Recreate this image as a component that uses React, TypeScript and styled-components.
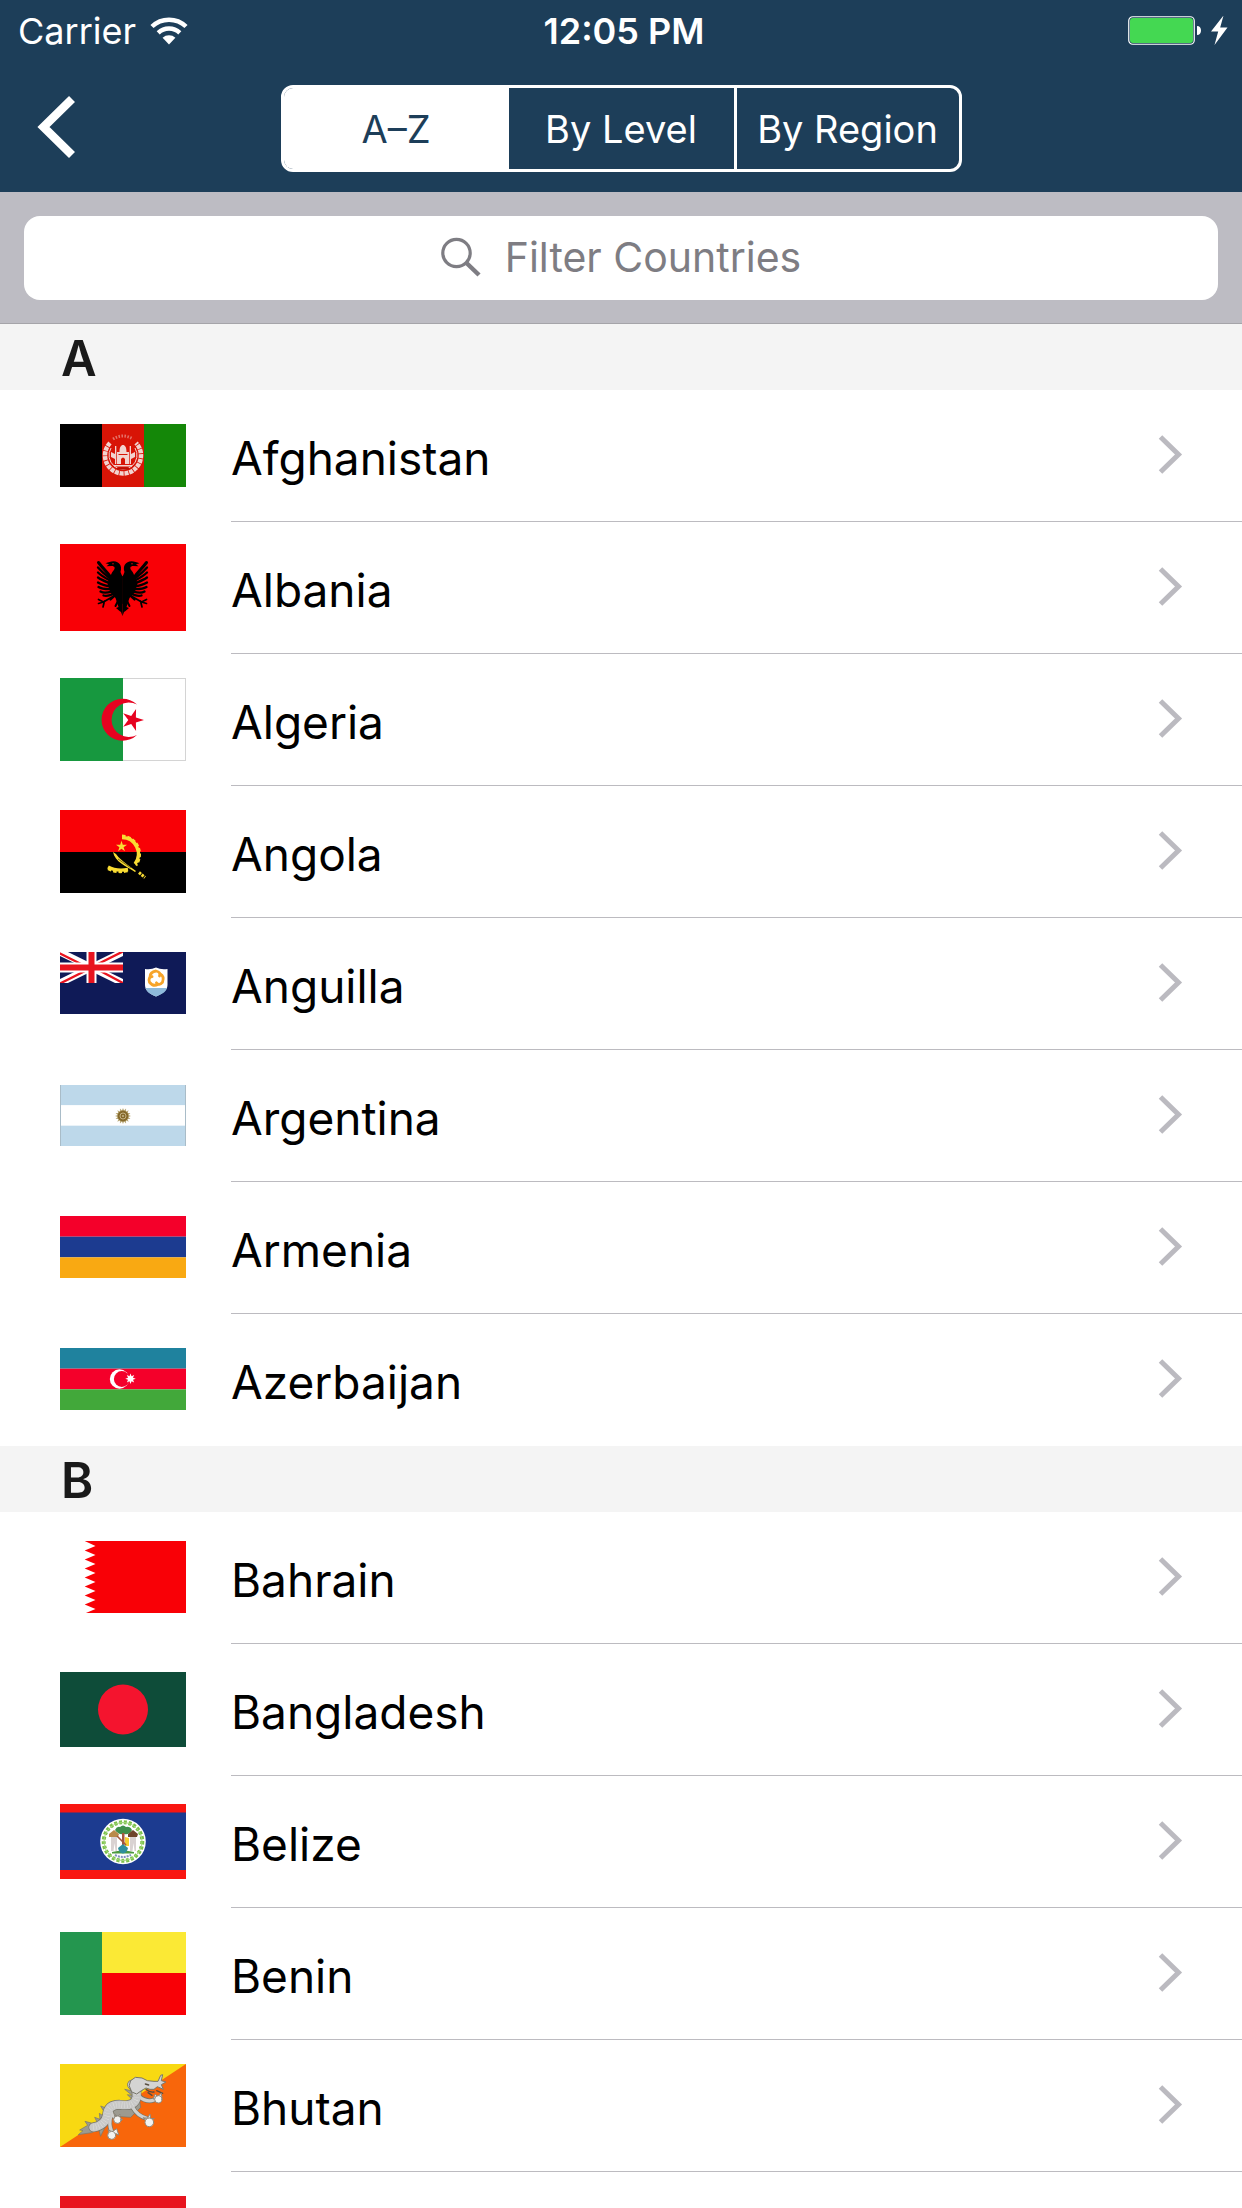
import React, { useState } from "react";
import styled, { createGlobalStyle } from "styled-components";

const GlobalStyle = createGlobalStyle`
  * { box-sizing: border-box; }
  body {
    margin: 0;
    background: #ffffff;
    color: #000000;
    font-family: Inter, "Liberation Sans", sans-serif;
  }
`;

const navy = "#1d3e59";

const Screen = styled.div`
  height: 100vh;
  overflow: hidden;
  background: #ffffff;
`;

const TopBar = styled.header`
  background: ${navy};
  color: #ffffff;
`;

const StatusBar = styled.div`
  display: grid;
  grid-template-columns: 1fr auto 1fr;
  align-items: center;
  height: 60px;
  padding: 2px 12px 0 18px;
  font-size: 36px;
  line-height: 44px;
`;

const Carrier = styled.div`
  display: flex;
  align-items: center;
  gap: 14px;
`;

const Clock = styled.time`
  font-weight: 600;
`;

const Power = styled.div`
  display: flex;
  align-items: center;
  justify-content: flex-end;
`;

const NavBar = styled.nav`
  display: grid;
  grid-template-columns: 1fr 681px 1fr;
  align-items: start;
  height: 132px;
  padding-top: 25px;
`;

const BackButton = styled.button`
  display: flex;
  align-items: center;
  width: 112px;
  height: 83px;
  padding: 0 0 0 36px;
  border: 0;
  background: none;
  color: inherit;
  cursor: pointer;
`;

const Segments = styled.div`
  display: grid;
  grid-template-columns: repeat(3, 1fr);
  height: 87px;
  border: 3px solid #ffffff;
  border-radius: 12px;
  overflow: hidden;
`;

const Segment = styled.button<{ $active: boolean; $divided: boolean }>`
  padding: 0;
  border: 0;
  border-left: ${(p) => (p.$divided ? "3px solid #ffffff" : "0")};
  background: ${(p) => (p.$active ? "#ffffff" : "transparent")};
  color: ${(p) => (p.$active ? navy : "#ffffff")};
  font: 400 38px/48px Inter, "Liberation Sans", sans-serif;
  white-space: nowrap;
  cursor: pointer;
`;

const SearchBar = styled.form`
  padding: 24px 24px 23px;
  background: #bdbcc3;
  border-bottom: 1px solid #a5a4a9;
`;

const SearchField = styled.label`
  display: flex;
  align-items: center;
  justify-content: center;
  gap: 24px;
  height: 84px;
  padding-bottom: 3px;
  border-radius: 16px;
  background: #ffffff;
  color: #7e7d83;
`;

const SearchInput = styled.input`
  field-sizing: content;
  max-width: 80%;
  padding: 0;
  border: 0;
  outline: 0;
  background: none;
  color: #000000;
  font: 400 41px/52px Inter, "Liberation Sans", sans-serif;

  &::placeholder {
    color: #7e7d83;
    opacity: 1;
  }
`;

const SectionTitle = styled.h2`
  height: 66px;
  margin: 0;
  padding: 4px 61px 0;
  background: #f4f4f4;
  color: #1a1a1a;
  font-size: 49px;
  line-height: 62px;
  font-weight: 600;
`;

const CountryList = styled.ul`
  margin: 0;
  padding: 0;
  list-style: none;
`;

const CountryLink = styled.a`
  display: flex;
  align-items: center;
  gap: 45px;
  padding-left: 60px;
  color: inherit;
  text-decoration: none;
`;

const FlagBox = styled.span`
  flex: none;
  display: flex;
  width: 126px;
  padding-bottom: 2px;
`;

const CountryBody = styled.span`
  flex: 1;
  display: flex;
  align-items: center;
  justify-content: space-between;
  height: 132px;
  padding-right: 59px;
  border-bottom: 1px solid #bcbbc0;

  li:last-child > a > & {
    border-bottom-color: transparent;
  }
`;

const CountryName = styled.span`
  padding-top: 4px;
  font-size: 46px;
  line-height: 56px;
`;

/* ---------- icons ---------- */

const WifiIcon = () => (
  <svg width="38" height="28" viewBox="0 0 38 28" fill="none" aria-hidden="true">
    <path d="M2 9.5a24.5 24.5 0 0 1 34 0" stroke="#fff" strokeWidth="4.500" />
    <path d="M8.2 15.8a15.8 15.8 0 0 1 21.6 0" stroke="#fff" strokeWidth="4.500" />
    <path d="M19 27.5 12.6 20.8a9.5 9.5 0 0 1 12.8 0Z" fill="#fff" />
  </svg>
);

const BatteryIcon = () => (
  <svg width="102" height="30" viewBox="0 0 102 30" fill="none" aria-hidden="true">
    <rect x=".75" y=".75" width="65.5" height="27.5" rx="4" stroke="#fff" strokeWidth="1.200" />
    <rect x="2" y="2" width="63" height="25" rx="3" fill="#44d852" />
    <path d="M69 10c2.700 0 4 2 4 4.500s-1.300 4.500-4 4.500Z" fill="#fff" />
    <path d="M95.500-.5 83 15.500h7.200L86.500 29 99.500 11.500h-7.300Z" fill="#fff" />
  </svg>
);

const BackIcon = () => (
  <svg width="40" height="64" viewBox="0 0 40 64" fill="none" aria-hidden="true">
    <path d="M36 4 7.500 32 36 60" stroke="#fff" strokeWidth="8.500" />
  </svg>
);

const SearchIcon = () => (
  <svg width="40" height="40" viewBox="0 0 40 40" fill="none" aria-hidden="true">
    <circle cx="15.500" cy="16" r="13.700" stroke="currentColor" strokeWidth="3.200" />
    <path d="m25.500 26 12.500 12" stroke="currentColor" strokeWidth="4.500" />
  </svg>
);

const ChevronIcon = () => (
  <svg width="25" height="42" viewBox="0 0 25 42" fill="none" aria-hidden="true">
    <path d="M2.500 2 20.500 19.500 2.500 37" stroke="#bbbac0" strokeWidth="5" />
  </svg>
);

/* ---------- flags ---------- */

const Flag = ({ h, children }: { h: number; children: React.ReactNode }) => (
  <svg width="126" height={h} viewBox={`0 0 126 ${h}`} aria-hidden="true">
    {children}
  </svg>
);

const star = (cx: number, cy: number, r: number, inner: number, points: number, turn: number) =>
  Array.from({ length: points * 2 }, (_, i) => {
    const a = turn + (i * Math.PI) / points;
    const d = i % 2 ? inner : r;
    return `${cx + d * Math.cos(a)},${cy + d * Math.sin(a)}`;
  }).join(" ");

const Stripes = ({ h, colors }: { h: number; colors: string[] }) => (
  <>
    {colors.map((c, i) => (
      <rect key={i} y={(h / 3) * i} width="126" height={h / 3} fill={c} />
    ))}
  </>
);

const Afghanistan = () => (
  <Flag h={63}>
    <rect width="42" height="63" />
    <rect x="42" width="42" height="63" fill="#d81406" />
    <rect x="84" width="42" height="63" fill="#148708" />
    <g fill="none" stroke="#f2d3cf">
      <path d="M50 19a18 18 0 1 0 26 0" strokeWidth="4.500" strokeDasharray="4 .8" />
      <path d="M51 24a14 14 0 1 0 24 0" strokeWidth="1" />
      <path d="M53 15q10-6 20 0" strokeWidth="3" strokeDasharray="1.500 1.500" opacity=".5" />
    </g>
    <g fill="#f2d3cf">
      <path d="M57 40V28h2.500c0-5 1.500-7 3.500-7s3.500 2 3.500 7H69v12Z" />
      <path d="M55 22h1.300v18H55zM69.700 22H71v18h-1.300zM51 28l4 2v5l-4-2zM75 28l-4 2v5l4-2z" />
      <path d="M54 41h18v1.500H54z" />
    </g>
    <path d="M61 40v-5q2-3 4 0v5ZM58.500 30h9v1h-9z" fill="#d81406" />
    <path d="M57 43.500h12v2H57z" fill="#b80f04" />
  </Flag>
);

const EagleHalf = () => (
  <>
    <path d="M0 33 2 28C0 22 3 17.500 9 17.300c3 0 5 1 8 2l-3.500.9 2.500 2-5-.2c-3.500 0-4 2.300-2 4.500 4 4.500 4 10 2 22L7 54l-3 9 2.500 1L3 67l-1.500 1L0 72Z" />
    <path d="M0 32 8 30 13 33 15 40 12 49 7 53 0 60Z" />
    <g fill="none" stroke="#000" strokeLinecap="round" strokeWidth="2.300">
      <path d="M8 40C12 30 17 28 24 18.500" strokeWidth="3" />
      <path d="M8 38C15 32 19 30 24.500 23.500" />
      <path d="M8 39C15 35 20 33 24.500 28.500" />
      <path d="M8 41C15 38 20 37 24.500 33.500" />
      <path d="M8 43C14 42 19 42 24.500 38.500" />
      <path d="M8 45C14 45 19 46 24 43" />
      <path d="M8 47C13 48 18 50 22 47.500" />
      <path d="M7 49C11 51 15 53 19 51.500" />
      <path d="M7 51 12 55.500" />
      <path d="M7 51C12 54 16 56 19 58m0 0 5-2.500M19 58l5 1.500M18 57l1.500 6" strokeWidth="1.700" />
      <path d="M4 56 7 62" strokeWidth="2" />
    </g>
  </>
);

const Albania = () => (
  <Flag h={87}>
    <rect width="126" height="87" fill="#f90006" />
    <g transform="translate(62.500 0)">
      <EagleHalf />
    </g>
    <g transform="translate(62.500 0) scale(-1 1)">
      <EagleHalf />
    </g>
    <circle cx="53" cy="19.800" r=".7" fill="#f90006" />
    <circle cx="72" cy="19.800" r=".7" fill="#f90006" />
  </Flag>
);

const Algeria = () => (
  <Flag h={83}>
    <rect x=".5" y=".5" width="125" height="82" fill="#fff" stroke="#d4d4d4" />
    <rect width="63" height="83" fill="#17983f" />
    <path d="M77 26.500a21 21 0 1 0 0 30.500 17.300 17.300 0 1 1 0-30.500Z" fill="#e60320" />
    <polygon points={star(72.5, 42, 11.5, 4.2, 5, 0)} fill="#e60320" />
  </Flag>
);

const Angola = () => (
  <Flag h={83}>
    <rect width="126" height="42" fill="#f90006" />
    <rect y="42" width="126" height="41" />
    <g fill="none" stroke="#f9dc33">
      <path d="M62 27.500A16.500 16.500 0 0 1 75 54" strokeWidth="3.400" />
      <path d="M62 25.800A18.500 18.500 0 0 1 76 55.500" strokeWidth="2.500" strokeDasharray="3.500 2" />
      <path d="M48 57q8 4.500 20 2.500" strokeWidth="3.400" />
      <path d="M48 59q9 4.500 20 2" strokeWidth="2.500" strokeDasharray="3.500 2" />
      <path d="m79 62.500 6 5" strokeWidth="3" strokeDasharray="2.500 1" />
    </g>
    <path d="M53 42 56 44q3 5 20 17l-1 1C66 56 55 52 53 42Z" fill="#f9dc33" />
    <path d="m58 49 13 9" stroke="#5c4f0c" strokeWidth=".8" />
    <polygon points={star(61.5, 36.5, 5.8, 2.2, 5, -Math.PI / 2)} fill="#f9dc33" />
  </Flag>
);

const Anguilla = () => (
  <Flag h={62}>
    <rect width="126" height="62" fill="#0f1a57" />
    <svg width="63" height="31" viewBox="0 0 63 31">
      <path d="m0 0 63 31M63 0 0 31" stroke="#fff" strokeWidth="7" />
      <path d="m-1 1 32 16M64-1 32 15M31 14l32 17M31 16-1 32" stroke="#e8141f" strokeWidth="2.400" />
      <path d="M31.500 0v31M0 15.500h63" stroke="#fff" strokeWidth="10" />
      <path d="M31.500 0v31M0 15.500h63" stroke="#e8141f" strokeWidth="6" />
    </svg>
    <path d="M85 17q6 1 11-1.500 5 2.500 11.500 1.500v16c0 6-6 9-11.500 11.500C90 42 85 39 85 33Z" fill="#fff" />
    <path d="M85.500 36h21.500c-1.500 4.500-6 6.500-11 8.500-5-2-9-4-10.500-8.500Z" fill="#8ebadb" />
    <g fill="none" stroke="#f6a42a" strokeWidth="2.800" strokeLinecap="round">
      {[0, 120, 240].map((turn) => (
        <path key={turn} d="M90 25q0-5 6-6 5 1 3.500 5" transform={`rotate(${turn} 96 26.500)`} />
      ))}
    </g>
  </Flag>
);

const Argentina = () => (
  <Flag h={61}>
    <Stripes h={61} colors={["#bdd8ea", "#ffffff", "#bdd8ea"]} />
    <path d="M.5 0v61M125.500 0v61" stroke="#a9bcc8" />
    <polygon points={star(63, 31, 8, 5.5, 16, 0)} fill="#b9a877" />
    <circle cx="63" cy="31" r="5.400" fill="#85692a" />
    <circle cx="63" cy="31" r="3" fill="none" stroke="#c9b98c" strokeWidth=".9" />
    <circle cx="63" cy="31" r="1" fill="#c9b98c" />
  </Flag>
);

const Armenia = () => (
  <Flag h={62}>
    <Stripes h={62} colors={["#f4002a", "#1c3b90", "#f9a912"]} />
  </Flag>
);

const Azerbaijan = () => (
  <Flag h={62}>
    <Stripes h={62} colors={["#1f829e", "#f4002a", "#42a83a"]} />
    <circle cx="59.500" cy="31" r="9.700" fill="#fff" />
    <circle cx="61.800" cy="31" r="7.900" fill="#f4002a" />
    <polygon points={star(70.5, 30.7, 5.2, 2.7, 8, 0)} fill="#fff" />
  </Flag>
);

const bahrainEdge = Array.from({ length: 8 }, (_, i) => `35.5,${5 + 9 * i} 24.7,${9.5 + 9 * i}`).join(" ");

const Bahrain = () => (
  <Flag h={72}>
    <polygon points={`126,0 24.7,0 ${bahrainEdge} 126,72`} fill="#f90006" />
  </Flag>
);

const Bangladesh = () => (
  <Flag h={75}>
    <rect width="126" height="75" fill="#0e4c39" />
    <circle cx="63" cy="37.500" r="25" fill="#f4142e" />
  </Flag>
);

const Belize = () => (
  <Flag h={75}>
    <rect width="126" height="75" fill="#f91611" />
    <rect y="8.500" width="126" height="57.500" fill="#1c3b90" />
    <circle cx="63" cy="37.500" r="22.800" fill="#fff" />
    <circle cx="63" cy="37.500" r="19.300" fill="none" stroke="#7cc24a" strokeWidth="4" strokeDasharray="3 1.800" />
    <circle cx="63" cy="37.500" r="19" fill="none" stroke="#a6d67f" strokeWidth="1" />
    <path d="M52 48q11-3 22 0v1.500H52z" fill="#4d9a3f" />
    <path d="M55 26q2-4 5-3 3-3 6 0 4-1 6 3-2 5-8 4-6 1-9-4Z" fill="#3f8f4a" />
    <path d="M62 29h2.500v12H62z" fill="#a4573c" />
    <path d="m49 30 5-4 5 4-1 3h-9Z" fill="#b98a4a" />
    <path d="m68 30 5-4 5 4-1 3h-9Z" fill="#6f452b" />
    <path d="M51 33h6v14h-1.500l-1-8-1 8H51zM70 33h6v14h-1.500l-1-8-1 8H70z" fill="#d9d2d2" />
    <path d="m65 33 4 1v8h-4z" fill="#f4cf2f" />
    <path d="m57 32 9 9" stroke="#a4573c" strokeWidth="1.600" />
    <path d="m63 40 5 4q-1 5-5 5.500-4-.5-5-5.500Z" fill="#2f8f9c" />
    <path d="M55 51q8 4 16 0" fill="none" stroke="#7f8fc0" strokeWidth="2" strokeDasharray="2 1" />
  </Flag>
);

const Benin = () => (
  <Flag h={83}>
    <rect width="126" height="83" fill="#f90006" />
    <rect x="42" width="84" height="41" fill="#fbe935" />
    <rect width="42" height="83" fill="#24964f" />
  </Flag>
);

const dragonLimbs = "M278 622q14 26 44 34M212 650q-6 22 2 42M298 590q22 18 44 10M214 638q4 10 12 14";
const dragonTrunk = "M160 682Q196 676 201 646Q204 614 238 614Q286 622 290 590Q292 568 276 554";

const Bhutan = () => (
  <Flag h={83}>
    <rect width="126" height="83" fill="#f8660b" />
    <path d="M0 83V0h126Z" fill="#f8d912" />
    <g transform="scale(.33333) translate(-60 -492)" strokeLinejoin="round" strokeLinecap="round">
      <g fill="#9c9a90" stroke="#77756a" strokeWidth="2">
        <path d="M172 668l-8-16 16 6-2-18 12 8 0-16-8-14 16 6 10-16 10 8 8-10 12 8 10-8 8 8 14-10 4 12 2-18-14-14 14 2-22-18 20 4-10-18 14 4-4-16 14 6 8-12 10 8 12-2 8 10-30 30 6 40-30 30-60-4-30 60Z" />
        <path d="M165 672l-30-8 8 12-24 14 10 2-14 12 40-6 30-16Z" />
      </g>
      <g fill="none">
        <path d={dragonLimbs} stroke="#77756a" strokeWidth="14" />
        <path d={dragonTrunk} stroke="#77756a" strokeWidth="29" />
        <path d={dragonLimbs} stroke="#cfcfcd" strokeWidth="10" />
        <path d={dragonTrunk} stroke="#c9c9c8" strokeWidth="25" />
        <path d={dragonTrunk} stroke="#e8e8e7" strokeWidth="18" strokeDasharray="1 7" strokeLinecap="butt" />
      </g>
      <path
        d="M268 556l4-14 14-10 20 2 16 8 20 2 12 0 8-18 6-2-4 18 14 4-14 8 6 14-18-8-10 8-12 0-12-4-14 8-14 10-14-6Z"
        fill="#d4d4d3"
        stroke="#77756a"
        strokeWidth="3"
      />
      <path d="M318 568q10 10 24 8M324 578l12 8M316 552l10 3M350 572l18 8" fill="none" stroke="#574d40" strokeWidth="4" />
      <g fill="#f3f3f1" stroke="#8f887b" strokeWidth="3">
        <path d="M222 640l4 16 14-14-2 14 10 2-8 8Z" />
        <circle cx="232" cy="659" r="11" />
        <path d="M204 690l6 10 20-14 6 18Z" />
        <circle cx="215" cy="706" r="12" />
        <path d="M310 654l10 4 10-16 2 14 10 0Z" />
        <circle cx="328" cy="667" r="13" />
        <path d="M340 596l6-14 6 8 12-10 2 14Z" />
        <circle cx="355" cy="598" r="11" />
      </g>
    </g>
  </Flag>
);

const Bolivia = () => (
  <Flag h={83}>
    <Stripes h={83} colors={["#e8141e", "#f9e300", "#007a33"]} />
  </Flag>
);

/* ---------- data ---------- */

const sections = [
  {
    letter: "A",
    countries: [
      { name: "Afghanistan", Art: Afghanistan },
      { name: "Albania", Art: Albania },
      { name: "Algeria", Art: Algeria },
      { name: "Angola", Art: Angola },
      { name: "Anguilla", Art: Anguilla },
      { name: "Argentina", Art: Argentina },
      { name: "Armenia", Art: Armenia },
      { name: "Azerbaijan", Art: Azerbaijan },
    ],
  },
  {
    letter: "B",
    countries: [
      { name: "Bahrain", Art: Bahrain },
      { name: "Bangladesh", Art: Bangladesh },
      { name: "Belize", Art: Belize },
      { name: "Benin", Art: Benin },
      { name: "Bhutan", Art: Bhutan },
      { name: "Bolivia", Art: Bolivia },
    ],
  },
];

const views = ["A–Z", "By Level", "By Region"];

export default function App() {
  const [view, setView] = useState(views[0]);
  const [query, setQuery] = useState("");
  const activeIndex = views.indexOf(view);

  const matching = sections
    .map((s) => ({
      ...s,
      countries: s.countries.filter((c) => c.name.toLowerCase().includes(query.toLowerCase())),
    }))
    .filter((s) => s.countries.length > 0);

  return (
    <Screen>
      <GlobalStyle />
      <TopBar>
        <StatusBar>
          <Carrier>
            Carrier
            <WifiIcon />
          </Carrier>
          <Clock>12:05 PM</Clock>
          <Power>
            <BatteryIcon />
          </Power>
        </StatusBar>
        <NavBar>
          <BackButton aria-label="Back">
            <BackIcon />
          </BackButton>
          <Segments role="group" aria-label="Sort countries">
            {views.map((v, i) => (
              <Segment
                key={v}
                $active={i === activeIndex}
                $divided={i > 0 && i !== activeIndex && i - 1 !== activeIndex}
                aria-pressed={i === activeIndex}
                onClick={() => setView(v)}
              >
                {v}
              </Segment>
            ))}
          </Segments>
        </NavBar>
      </TopBar>
      <SearchBar role="search" onSubmit={(e) => e.preventDefault()}>
        <SearchField>
          <SearchIcon />
          <SearchInput
            type="text"
            aria-label="Filter Countries"
            placeholder="Filter Countries"
            value={query}
            onChange={(e) => setQuery(e.target.value)}
          />
        </SearchField>
      </SearchBar>
      <main>
        {matching.map(({ letter, countries }) => (
          <section key={letter}>
            <SectionTitle>{letter}</SectionTitle>
            <CountryList>
              {countries.map(({ name, Art }) => (
                <li key={name}>
                  <CountryLink href={`#${name.toLowerCase()}`}>
                    <FlagBox>
                      <Art />
                    </FlagBox>
                    <CountryBody>
                      <CountryName>{name}</CountryName>
                      <ChevronIcon />
                    </CountryBody>
                  </CountryLink>
                </li>
              ))}
            </CountryList>
          </section>
        ))}
      </main>
    </Screen>
  );
}
